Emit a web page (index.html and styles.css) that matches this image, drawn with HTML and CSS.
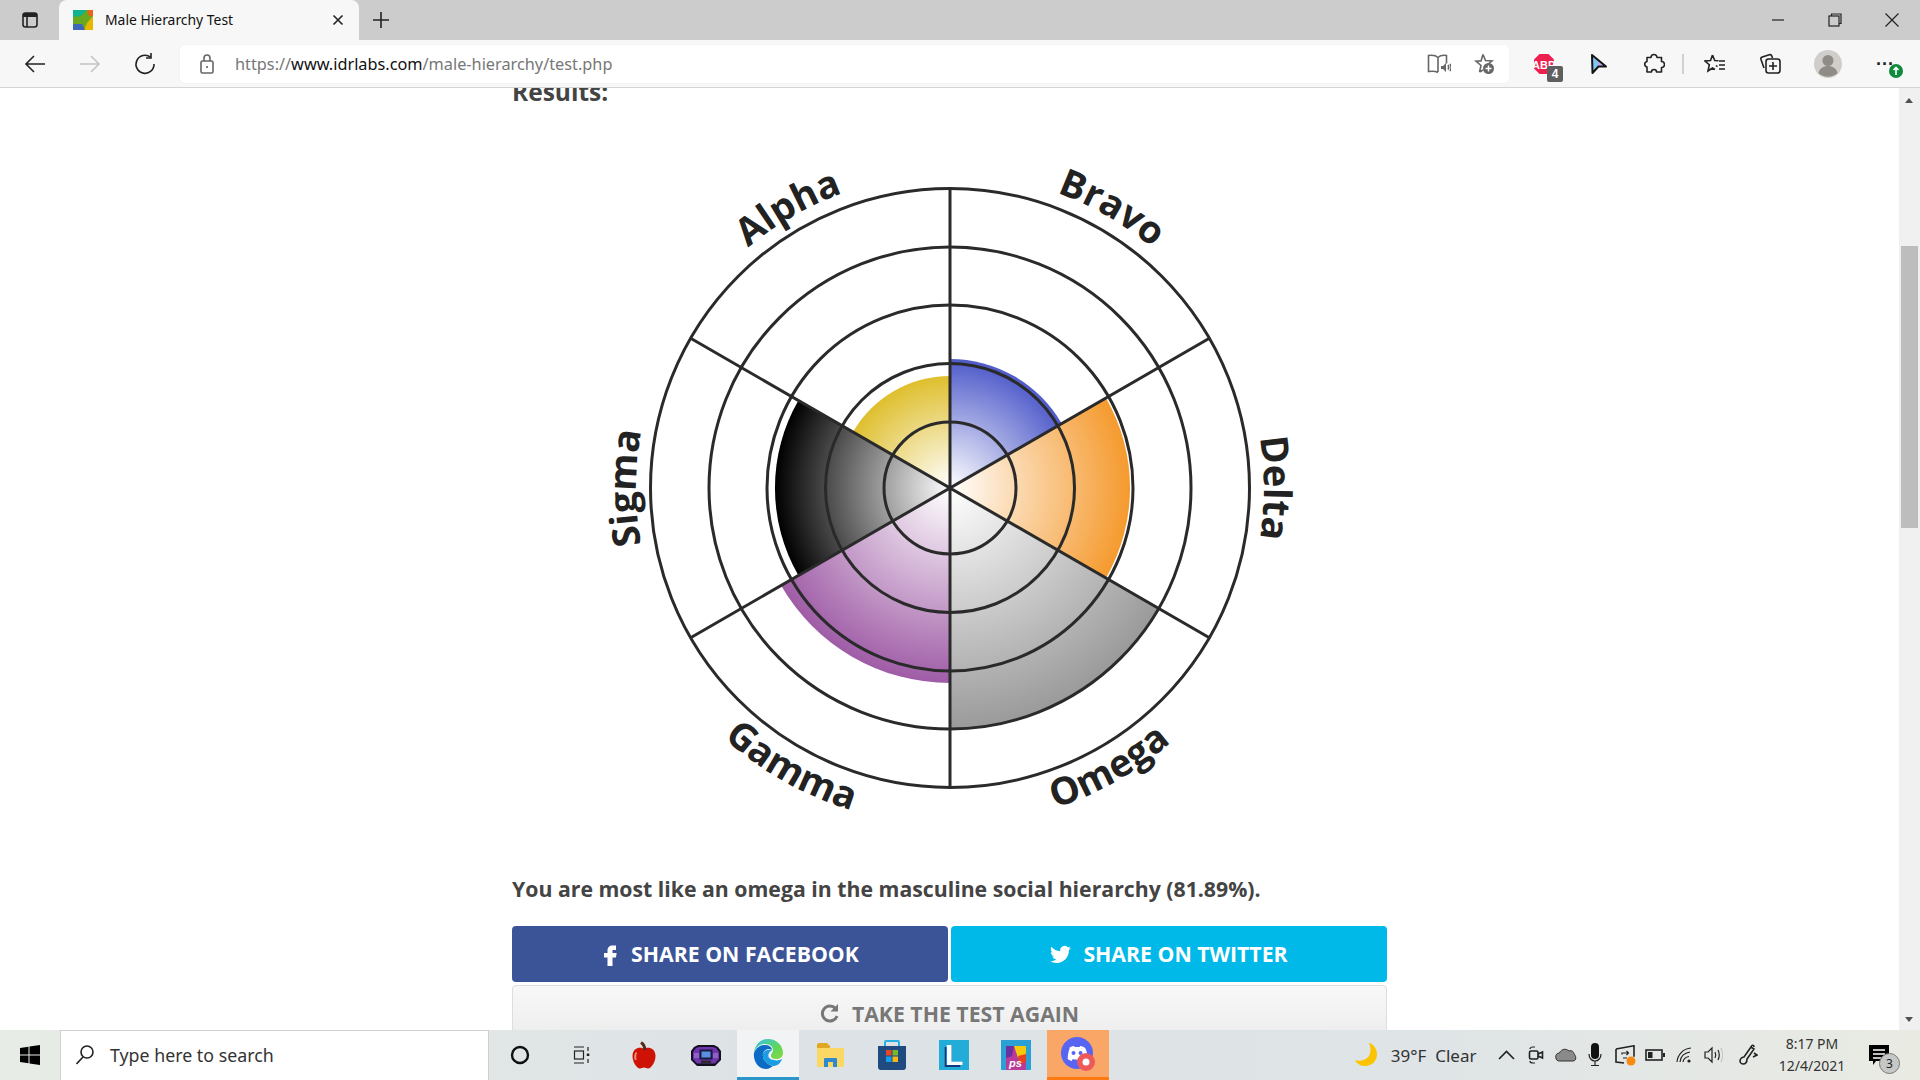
FILE: index.html
```html
<!DOCTYPE html>
<html lang="en">
<head>
  <meta charset="UTF-8" />
  <title>Male Hierarchy Test</title>
  <link rel="stylesheet" href="styles.css">
</head>
<body>
  <header class="titlebar">
    <span class="tab-actions">
      <svg width="20" height="20" viewBox="0 0 20 20"><rect x="3" y="3" width="14" height="14" rx="2.5" class="ic"/><path d="M3 7V5.500A2.500 2.500 0 0 1 5.500 3h9A2.500 2.500 0 0 1 17 5.500V7z" fill="#222"/><path d="M7 7v10" class="ic"/></svg>
    </span>
    <div class="tab">
      <svg class="favicon" width="20" height="20" viewBox="0 0 20 20"><rect width="20" height="20" fill="#6aa820"/><path d="M0 0h14l-6 6-8 1z" fill="#0fb48c"/><path d="M14 0h6v6l-4 0z" fill="#e8641a"/><path d="M20 6v14h-9l3-7z" fill="#e8b800"/><path d="M0 14h9l3 6H0z" fill="#3f66b8"/></svg>
      <span class="tab-title">Male Hierarchy Test</span>
      <svg class="tab-close" width="12" height="12" viewBox="0 0 12 12"><path d="M1.500 1.500l9 9M10.500 1.500l-9 9" class="ic"/></svg>
    </div>
    <svg class="new-tab" width="18" height="18" viewBox="0 0 18 18"><path d="M9 1v16M1 9h16" class="ic"/></svg>
    <div class="window-btns">
      <svg width="14" height="14" viewBox="0 0 14 14"><path d="M1 7h12" class="ic thin"/></svg>
      <svg width="14" height="14" viewBox="0 0 14 14"><rect x="1" y="3" width="10" height="10" class="ic thin"/><path d="M3.500 3V1h9.500v9.500H11" class="ic thin"/></svg>
      <svg width="14" height="14" viewBox="0 0 14 14"><path d="M.5.5l13 13M13.500.5l-13 13" class="ic thin"/></svg>
    </div>
  </header>

  <nav class="toolbar">
    <span class="slot"><svg width="22" height="20" viewBox="0 0 22 20"><path d="M21 10H2M10 2l-8 8 8 8" class="ic"/></svg></span>
    <span class="slot"><svg width="22" height="20" viewBox="0 0 22 20"><path d="M1 10h19M12 2l8 8-8 8" class="ic faded"/></svg></span>
    <span class="slot"><svg width="22" height="22" viewBox="0 0 22 22"><path d="M16.500 4.200A9 9 0 1 0 20 11" class="ic"/><path d="M17 0v5h-5" class="ic"/></svg></span>
    <div class="address">
      <svg class="lock" width="14" height="20" viewBox="0 0 14 20"><rect x="1" y="7" width="12" height="12" rx="1.500" class="ic grey"/><path d="M4 7V4a3 3 0 0 1 6 0v3" class="ic grey"/><circle cx="7" cy="13" r="1" fill="#555"/></svg>
      <span class="url">https://<b>www.idrlabs.com</b>/male-hierarchy/test.php</span>
      <svg class="read-aloud" width="24" height="20" viewBox="0 0 24 20"><path d="M11 3.500C9 1.500 5 1 1.500 1.500v16c3.500-.5 7-.5 9.500 1M11 3.500V18M11 3.500c2-2 5-2.500 8.500-2v8" class="ic grey"/><path d="M14 12h2l3-3v9l-3-3h-2z" fill="#666"/><path d="M21 11c.8 1.300.8 3 0 4.500M23 10c1.300 2 1.300 5 0 7" class="ic grey"/></svg>
      <svg class="fav-add" width="22" height="22" viewBox="0 0 22 22"><path d="M10 1.500l2.500 6 6.500.5-5 4.200M6.500 19l1.500-6.500L3 8.200l5-.3 2-6.400M6.500 19l3.500-2" class="ic grey"/><circle cx="15.500" cy="15.500" r="5.500" fill="#666"/><path d="M15.500 12.500v6M12.500 15.500h6" stroke="#fff" stroke-width="1.500"/></svg>
    </div>
    <span class="slot slot-abp">
      <svg width="22" height="22" viewBox="0 0 22 22"><path d="M6.500 1h9L21 6.500v9L15.500 21h-9L1 15.500v-9z" fill="#ee2050"/></svg>
      <span class="abp-text">ABP</span>
      <span class="abp-count">4</span>
    </span>
    <span class="slot"><svg width="18" height="22" viewBox="0 0 18 22"><defs><linearGradient id="cursor-fill" x1="0" y1="0" x2="1" y2="0"><stop offset=".3" stop-color="#7cc8f0"/><stop offset=".55" stop-color="#c4a4ee"/></linearGradient></defs><path d="M2 2l14 11.500H8.500L2.500 20z" fill="url(#cursor-fill)" stroke="#151515" stroke-width="2" stroke-linejoin="round"/></svg></span>
    <span class="slot"><svg width="22" height="22" viewBox="0 0 22 22"><path d="M8 4.500a3 3 0 0 1 6 0h4.500v4a3 3 0 0 1 0 6v4.500h-5a2.500 2.500 0 0 0-5 0H4v-5a2.800 2.800 0 0 1 0-5.500V4.500z" class="ic" stroke-linejoin="round"/></svg></span>
    <span class="tool-sep"></span>
    <span class="slot"><svg width="22" height="22" viewBox="0 0 22 22"><path d="M8.500 2l2.200 5.500 3.800.3M12 12.500l1.500 1.200M8.500 2L6.500 7.500 1 8l4.300 3.700L4 18l4.500-3 2.500 1.500" class="ic"/><path d="M15 8h6M15 12h6M15 16h6" class="ic"/></svg></span>
    <span class="slot"><svg width="22" height="22" viewBox="0 0 22 22"><path d="M5 15L2 6.500a2 2 0 0 1 1.300-2.500l7-2.200a2 2 0 0 1 2.500 1.200l.7 2" class="ic"/><rect x="7" y="6" width="14" height="14" rx="2.500" class="ic"/><path d="M14 9v8M10 13h8" class="ic"/></svg></span>
    <span class="avatar">
      <svg width="28" height="28" viewBox="0 0 28 28"><circle cx="14" cy="14" r="14" fill="#d0ceca"/><circle cx="14" cy="10.500" r="5.500" fill="#8f8c88"/><path d="M4.500 23c1.500-5 5-7 9.500-7s8 2 9.500 7a14 14 0 0 1-19 0z" fill="#8f8c88"/></svg>
    </span>
    <span class="slot slot-more">
      <span class="dots">···</span>
      <svg class="update" width="14" height="14" viewBox="0 0 14 14"><circle cx="7" cy="7" r="7" fill="#108a3c"/><path d="M7 11V3.500M4.500 6L7 3.500 9.500 6" stroke="#fff" stroke-width="1.600" fill="none"/></svg>
    </span>
  </nav>

  <div class="viewport">
    <main class="content">
      <h3 class="results">Results:</h3>
      <svg class="wheel" width="700" height="700" viewBox="-350 -350 700 700">
        <defs>
          <radialGradient id="g-alpha" gradientUnits="userSpaceOnUse" cx="0" cy="0" r="112"><stop offset="0" stop-color="#fff"/><stop offset="1" stop-color="#dfbf2e"/></radialGradient>
          <radialGradient id="g-bravo" gradientUnits="userSpaceOnUse" cx="0" cy="0" r="129"><stop offset="0" stop-color="#fff"/><stop offset="1" stop-color="#4f5bca"/></radialGradient>
          <radialGradient id="g-delta" gradientUnits="userSpaceOnUse" cx="0" cy="0" r="180"><stop offset="0" stop-color="#fff"/><stop offset="1" stop-color="#f59a2e"/></radialGradient>
          <radialGradient id="g-omega" gradientUnits="userSpaceOnUse" cx="0" cy="0" r="241"><stop offset="0" stop-color="#fff"/><stop offset="1" stop-color="#9a9a9a"/></radialGradient>
          <radialGradient id="g-gamma" gradientUnits="userSpaceOnUse" cx="0" cy="0" r="195"><stop offset="0" stop-color="#fff"/><stop offset="1" stop-color="#9f5ca6"/></radialGradient>
          <radialGradient id="g-sigma" gradientUnits="userSpaceOnUse" cx="0" cy="0" r="175"><stop offset="0" stop-color="#fff"/><stop offset="1" stop-color="#000"/></radialGradient>
          <path id="arc-out" d="M-240.500 -201.800A314 314 0 0 1 240.500 -201.800"/>
          <path id="arc-in" d="M-258.200 216.600A337 337 0 0 0 258.200 216.600"/>
        </defs>
        <path d="M0 0L-97 -56A112 112 0 0 1 0 -112Z" fill="url(#g-alpha)"/>
        <path d="M0 0L0 -129A129 129 0 0 1 111.700 -64.500Z" fill="url(#g-bravo)"/>
        <path d="M0 0L155.900 -90A180 180 0 0 1 155.900 90Z" fill="url(#g-delta)"/>
        <path d="M0 0L208.700 120.500A241 241 0 0 1 0 241Z" fill="url(#g-omega)"/>
        <path d="M0 0L0 195A195 195 0 0 1 -168.900 97.500Z" fill="url(#g-gamma)"/>
        <path d="M0 0L-151.600 87.500A175 175 0 0 1 -151.600 -87.500Z" fill="url(#g-sigma)"/>
        <g class="wheel-lines">
          <circle r="66"/><circle r="124.500"/><circle r="183"/><circle r="241"/><circle r="299.500"/>
          <path d="M0 -299.500V299.500M-259.400 -149.750L259.400 149.750M-259.400 149.750L259.400 -149.750"/>
        </g>
        <g class="wheel-labels">
          <text transform="rotate(-30)"><textPath href="#arc-out" startOffset="50%">Alpha</textPath></text>
          <text transform="rotate(30)"><textPath href="#arc-out" startOffset="50%">Bravo</textPath></text>
          <text transform="rotate(90)"><textPath href="#arc-out" startOffset="50%">Delta</textPath></text>
          <text transform="rotate(-29.600)"><textPath href="#arc-in" startOffset="50%">Omega</textPath></text>
          <text transform="rotate(29.600)"><textPath href="#arc-in" startOffset="50%">Gamma</textPath></text>
          <text transform="rotate(-90)"><textPath href="#arc-out" startOffset="50%">Sigma</textPath></text>
        </g>
      </svg>
      <p class="verdict">You are most like an omega in the masculine social hierarchy (81.89%).</p>
      <div class="share-row">
        <a class="btn btn-fb">
          <svg width="18" height="24" viewBox="3 0 18 24"><path d="M14.500 8H18V3.500h-3.500C11.500 3.500 9.500 5.500 9.500 8.500V11H6v4.500h3.500V24h5v-8.500H18l.6-4.500h-4.100V9c0-.6.4-1 0-1z" fill="#fff"/></svg>
          <span class="btn-label">SHARE ON FACEBOOK</span>
        </a>
        <a class="btn btn-tw">
          <svg width="21" height="21" viewBox="0 0 24 24"><path d="M23.953 4.570a10 10 0 01-2.825.775 4.958 4.958 0 002.163-2.723c-.951.555-2.005.959-3.127 1.184a4.920 4.920 0 00-8.384 4.482C7.690 8.095 4.067 6.130 1.640 3.162a4.822 4.822 0 00-.666 2.475c0 1.710.870 3.213 2.188 4.096a4.904 4.904 0 01-2.228-.616v.060a4.923 4.923 0 003.946 4.827 4.996 4.996 0 01-2.212.085 4.936 4.936 0 004.604 3.417 9.867 9.867 0 01-6.102 2.105c-.390 0-.779-.023-1.170-.067a13.995 13.995 0 007.557 2.209c9.053 0 13.998-7.496 13.998-13.985 0-.210 0-.420-.015-.630A9.935 9.935 0 0024 4.590z" fill="#fff"/></svg>
          <span class="btn-label">SHARE ON TWITTER</span>
        </a>
      </div>
      <a class="btn btn-again">
        <svg width="20" height="20" viewBox="0 0 20 20"><path d="M15.500 5.500A7.500 7.500 0 1 0 17 13" fill="none" stroke="#777" stroke-width="3"/><path d="M18 1v7.500h-7.500z" fill="#777"/></svg>
        TAKE THE TEST AGAIN
      </a>
    </main>
    <aside class="scrollbar">
      <span class="arrow-up"></span>
      <span class="thumb"></span>
      <span class="arrow-down"></span>
    </aside>
  </div>

  <footer class="taskbar">
    <span class="start">
      <svg width="20" height="20" viewBox="0 0 20 20"><path d="M0 3l8.500-1.200V9.500H0zM9.500 1.600L20 0v9.500H9.500zM0 10.500h8.500v7.700L0 17zM9.500 10.500H20V20L9.500 18.400z" fill="#000"/></svg>
    </span>
    <div class="search">
      <svg width="18" height="20" viewBox="0 0 18 20"><circle cx="11" cy="7" r="6" class="ic"/><path d="M7 12l-6.500 7" class="ic"/></svg>
      <span>Type here to search</span>
    </div>
    <span class="task"><svg width="20" height="20" viewBox="0 0 20 20"><circle cx="10" cy="10" r="8" fill="none" stroke="#111" stroke-width="2.400"/></svg></span>
    <span class="task"><svg width="18" height="18" viewBox="0 0 18 18"><path d="M1 1h10M1 17h10" class="ic thin"/><rect x="1.500" y="5" width="9" height="8" class="ic thin"/><path d="M15 1v4M15 13v4" class="ic thin"/><rect x="13.800" y="7.500" width="2.500" height="2.500" fill="#222"/></svg></span>
    <span class="task"><svg width="24" height="28" viewBox="0 0 24 28"><path d="M12 8C9 5.500 1 6 .5 14.500.2 21 5 27.500 8 27.500c1.500 0 2.500-1 4-1s2.500 1 4 1c3 0 7.800-6.500 7.500-13C23 6 15 5.500 12 8z" fill="#cf1206"/><path d="M4.500 11.500c-1.500 2-1.500 5-.8 7.500" stroke="#f08a70" stroke-width="2" fill="none"/><path d="M12.500 9c.5-3-.5-5.500-3.500-7.500" stroke="#5a2a18" stroke-width="3" fill="none"/></svg></span>
    <span class="task"><svg width="30" height="21" viewBox="0 0 30 21"><path d="M0 6l3-4 4-2h16l4 2 3 4v9l-3 3-3 3H6l-3-3-3-3z" fill="#15101f"/><path d="M2 7l3-4 3-1h14l3 1 3 4v7l-4 4.500H6L2 14z" fill="#6f35ae"/><path d="M3 8h5v5H3zM22 8h5v5h-5z" fill="#8f60c8"/><rect x="8.500" y="4.500" width="13" height="10" fill="#1a1a40"/><rect x="10.500" y="6.500" width="9" height="6" fill="#5a90e0"/><path d="M10 15.500h10v3H10z" fill="#2a2a30"/></svg></span>
    <span class="task task-active"><svg width="30" height="30" viewBox="0 0 30 30"><defs><linearGradient id="edge-a" x1="0" y1="0" x2="1" y2="1"><stop offset="0" stop-color="#35c1f1"/><stop offset=".6" stop-color="#5fd65b"/><stop offset="1" stop-color="#8ad83f"/></linearGradient></defs><path d="M1 14C2 5 8 0 15 0c8 0 15 6 15 14 0 4-3 6-7 6-3 0-5-1-5-3 0-3 2-3 2-6 0-4-4-6-9-6-4 0-8 3-10 9z" fill="url(#edge-a)"/><path d="M1 14c2-5 6-8 10-8 5 0 8 2 8 5-3-2-8-1-9 4-1 5 3 10 10 12-2 1-4 3-7 3C6 30 0 23 1 14z" fill="#0c6bc4"/><path d="M10 15c-1 5 3 10 10 12 4 0 7-2 9-7-2 1-5 2-8 1-4 0-7-3-5-7 .5-1 2-2 3-3-4-1-8 0-9 4z" fill="#1b9de2"/></svg></span>
    <span class="task"><svg width="28" height="26" viewBox="0 0 28 26"><path d="M1 3a2 2 0 0 1 2-2h8l3 3h0v3H1z" fill="#e0a822"/><path d="M1 6h27v18a1 1 0 0 1-1 1H2a1 1 0 0 1-1-1z" fill="#fbd763"/><path d="M8 25v-8a1 1 0 0 1 1-1h11a1 1 0 0 1 1 1v8h-4v-5h-5v5z" fill="#2f88d0"/></svg></span>
    <span class="task"><svg width="30" height="32" viewBox="0 0 30 32"><path d="M8 7V3a1 1 0 0 1 1-1h12a1 1 0 0 1 1 1v4" fill="none" stroke="#28b0e0" stroke-width="2"/><path d="M1 7h28v21a3 3 0 0 1-3 3H4a3 3 0 0 1-3-3z" fill="#1f4b80"/><rect x="9" y="11" width="5.500" height="5.500" fill="#e8462a"/><rect x="15.500" y="11" width="5.500" height="5.500" fill="#7ab82a"/><rect x="9" y="17.500" width="5.500" height="5.500" fill="#14a0e8"/><rect x="15.500" y="17.500" width="5.500" height="5.500" fill="#f8b810"/></svg></span>
    <span class="task"><span class="tile tile-l">L</span></span>
    <span class="task"><svg width="30" height="30" viewBox="0 0 30 30"><rect width="30" height="30" fill="#2aa0d4"/><rect x="5" y="6" width="20" height="24" fill="#b83a9a"/><path d="M13 6h12v10l-8 2z" fill="#f6c80a"/><path d="M5 6h8l-2 10-6 2z" fill="#6a2fa0"/><path d="M17 16l8-2v8l-6 2z" fill="#e8421e"/><text x="8" y="27" class="tile-ps">ps</text></svg></span>
    <span class="task task-discord"><svg width="38" height="38" viewBox="0 0 38 38"><circle cx="18" cy="18" r="16" fill="#5865f2"/><path d="M10 13c3-2 5-2 5-2l.6 1h5l.6-1s2 0 5 2c2 4 2.500 8 2.500 11-2 1.500-4 2-4 2l-1-2c-3 1-7 1-10 0l-1 2s-2-.5-4-2c0-3 .5-7 2-11z" fill="#fff"/><circle cx="14.500" cy="18" r="2" fill="#5865f2"/><circle cx="21.500" cy="18" r="2" fill="#5865f2"/><circle cx="27" cy="27" r="9" fill="#ee5a5a"/><circle cx="27" cy="27" r="3.500" fill="#fff"/></svg></span>
    <div class="tray">
      <svg class="moon" width="24" height="24" viewBox="0 0 24 24"><path d="M15 0c3 0 8 5 8 11 0 7-5 12-12 12-4 0-8-2-10-6 5 2 11 0 14-4 2-4 2-9 0-13z" fill="#fcc400"/></svg>
      <span class="weather">39°F&nbsp; Clear</span>
      <span class="tray-slot"><svg width="17" height="10" viewBox="0 0 17 10"><path d="M1 9l7.500-7.500L16 9" class="ic"/></svg></span>
      <span class="tray-slot"><svg width="16" height="18" viewBox="0 0 16 18"><path d="M2 3c0-1 1-2 3-2h2M2 15c0 1 1 2 3 2h2" class="ic thin"/><rect x="1.500" y="5" width="8.500" height="8" rx="1.500" class="ic"/><path d="M10 8l4.500-2v6L10 10" class="ic"/></svg></span>
      <span class="tray-slot"><svg width="22" height="14" viewBox="0 0 22 14"><path d="M5 13a4 4 0 0 1-.5-8C6 1 11 0 14 3c3-1 5 1 5 3 2 1 3 7-1 7z" fill="#8a8a8a" stroke="#333" stroke-width="1"/></svg></span>
      <span class="tray-slot"><svg width="14" height="24" viewBox="0 0 14 24"><rect x="3" y="0" width="8" height="16" rx="4" fill="#111"/><path d="M1 11c0 4 2.500 7 6 7s6-3 6-7M7 18v4M3 22.500h8" class="ic thin"/></svg></span>
      <span class="tray-slot"><svg width="21" height="21" viewBox="0 0 21 21"><path d="M1 4l18-3.200v11M1 4v13l8 1" class="ic"/><path d="M7 9.500V8h6.500M11.500 6l2 2-2 2M12 13H8" class="ic thin"/><circle cx="16" cy="16" r="4.500" fill="#f98a10"/></svg></span>
      <span class="tray-slot"><svg width="20" height="12" viewBox="0 0 20 12"><rect x="1" y="1" width="16" height="10" class="ic"/><rect x="3" y="3" width="4.500" height="6" fill="#222"/><path d="M18 4h2v4h-2z" fill="#222"/></svg></span>
      <span class="tray-slot"><svg width="16" height="16" viewBox="0 0 16 16"><path d="M1 15C1.500 8 7 1.500 15 1M4 15c.5-5 4-9 10-10M7 15c.5-3 3-5 6-5.500" class="ic thin"/><circle cx="13" cy="14" r="1.600" fill="#222"/></svg></span>
      <span class="tray-slot"><svg width="20" height="18" viewBox="0 0 20 18"><path d="M1 6h3l4-4v14l-4-4H1z" class="ic thin"/><path d="M11 6c1 2 1 4 0 6M14 4c1.500 3 1.500 7 0 10" class="ic thin"/><path d="M17 2c2 4 2 10 0 14" class="ic thin faded"/></svg></span>
      <span class="tray-slot tray-pen"><svg width="20" height="22" viewBox="0 0 20 22"><path d="M13 3L6 13c-1 0-4 1-4 4 0 2 2 3 3 3 3 0 4-2 4-5l7-10zM13 3c.5-2 3-2.500 3 0M16 9l3 2-4 2" class="ic"/></svg></span>
      <div class="clock"><span>8:17 PM</span><span>12/4/2021</span></div>
      <span class="notify">
        <svg width="22" height="22" viewBox="0 0 22 22"><path d="M1 1h20v16H8l-3 4v-4H1z" fill="#000"/><path d="M5 6h12M5 10h12M5 14h8" stroke="#fff" stroke-width="1.400"/></svg>
        <span class="notify-count">3</span>
      </span>
    </div>
  </footer>
</body>
</html>
```

FILE: styles.css
```css
html, body { margin: 0; height: 100%; overflow: hidden; }
body { display: flex; flex-direction: column; background: #fff; font-family: "Noto Sans", sans-serif; color: #222; }
svg { display: block; }
.ic { fill: none; stroke: #222; stroke-width: 1.600; }
.thin { stroke-width: 1.200; }
.grey { stroke: #666; }
.faded { stroke: #c4c4c4; }

/* browser chrome */
.titlebar { flex: 0 0 40px; display: flex; align-items: center; background: #ccc; }
.tab-actions { width: 59px; display: flex; justify-content: center; }
.tab { width: 300px; height: 40px; box-sizing: border-box; padding: 0 15px 0 14px; display: flex; align-items: center; background: #f7f7f7; border-radius: 8px 8px 0 0; }
.tab-title { margin-left: 12px; margin-bottom: 1px; flex: 1; font-size: 13.900px; color: #111; }
.new-tab { margin-left: 13px; }
.window-btns { margin-left: auto; display: flex; gap: 43px; padding-right: 21px; }

.toolbar { flex: 0 0 48px; box-sizing: border-box; padding-left: 7px; display: flex; align-items: center; background: #f7f7f7; border-bottom: 1px solid #d4d4d4; }
.slot { position: relative; flex: 0 0 55px; display: flex; justify-content: center; align-items: center; }
.address { flex: 0 0 1329px; height: 38px; margin-left: 8px; margin-right: 7px; box-sizing: border-box; padding: 0 14px 0 20px; display: flex; align-items: center; background: #fff; border-radius: 5px; box-shadow: 0 0 2px rgba(0, 0, 0, .06); }
.url { margin-left: 21px; flex: 1; font-size: 16.300px; color: #777; }
.url b { font-weight: 400; color: #111; }
.read-aloud { margin-right: 22px; }
.abp-text { position: absolute; left: 16px; top: 6px; font: 700 11px "Liberation Sans", sans-serif; color: #fff; }
.abp-count { position: absolute; left: 31px; top: 13px; width: 16px; height: 16px; background: #5f5f5f; border-radius: 2px; font: 700 12px/16px "Liberation Sans", sans-serif; color: #fff; text-align: center; }
.tool-sep { width: 2px; height: 20px; margin: 0 3.500px 0 1px; background: #d0d0d0; }
.avatar { flex: 0 0 60px; display: flex; justify-content: center; }
.dots { font: 700 18px/1 "Liberation Sans", sans-serif; color: #222; }
.update { position: absolute; left: 31px; top: 9px; }

/* page */
.viewport { flex: 1; min-height: 0; display: flex; overflow: hidden; }
.content { flex: 1; min-width: 0; display: flex; flex-direction: column; align-items: center; }
.results, .verdict { width: 875px; margin: 0; font: 700 21.250px/28px "Open Sans", sans-serif; color: #444; }
.results { margin-top: -10px; font-size: 24.500px; }
.wheel { margin-top: 32px; flex: none; }
.wheel-lines { fill: none; stroke: #2a2a2a; stroke-width: 3; }
.wheel-labels { font: 700 38px "Open Sans", sans-serif; fill: #222; text-anchor: middle; }
.verdict { margin-top: 37px; }
.share-row { width: 875px; margin-top: 23px; flex: none; display: flex; gap: 3px; }
.btn { box-sizing: border-box; display: flex; justify-content: center; align-items: center; gap: 12px; font: 700 21.250px "Open Sans", sans-serif; border-radius: 4px; text-transform: uppercase; }
.btn-fb, .btn-tw { flex: 1; height: 56px; color: #fff; }
.btn-label { margin-bottom: 2px; }
.btn-fb { background: #3b5497; }
.btn-tw { background: #00b9e8; }
.btn-again { width: 875px; height: 56px; margin-top: 3px; flex: none; color: #777; background: linear-gradient(#f8f8f8, #ececec); border: 1px solid #ddd; }
.scrollbar { flex: 0 0 21px; position: relative; background: #f0f0f0; }
.thumb { position: absolute; left: 2px; right: 2px; top: 158px; height: 282px; background: #bdbdbd; }
.arrow-up, .arrow-down { position: absolute; left: 6px; width: 0; height: 0; border-left: 4.500px solid transparent; border-right: 4.500px solid transparent; }
.arrow-up { top: 10px; border-bottom: 5px solid #505050; }
.arrow-down { bottom: 8px; border-top: 5px solid #505050; }

/* windows taskbar */
.taskbar { flex: 0 0 50px; display: flex; align-items: stretch; background: linear-gradient(90deg, #e8ece6, #dde2e6 40%, #dfe4e6 75%, #e9ebe3); }
.start { flex: 0 0 60px; display: flex; justify-content: center; align-items: center; }
.search { flex: 0 0 429px; box-sizing: border-box; padding: 0 0 2px 15px; display: flex; align-items: center; gap: 16px; background: #fff; border: 1px solid #cfcfcf; border-bottom: 0; font-size: 17.800px; color: #333; }
.task { flex: 0 0 62px; box-sizing: border-box; display: flex; justify-content: center; align-items: center; }
.task-active { background: #f1f3f4; border-bottom: 3px solid #2a96ca; }
.task-discord { background: #f9a666; border-bottom: 3px solid #ff7a10; }
.tile { width: 30px; height: 30px; background: #24acd8; display: flex; justify-content: center; align-items: center; }
.tile-l { font: 700 30px "Liberation Sans", sans-serif; color: #fff; text-shadow: -2px 2px 0 #103a80; }
.tile-ps { font: italic 700 11px "Liberation Sans", sans-serif; fill: #fff; }
.tray { margin-left: auto; padding-right: 19px; display: flex; align-items: center; }
.moon { margin-right: 13px; }
.weather { margin-right: 15px; font-size: 17px; color: #333; }
.tray-slot { flex: 0 0 29.700px; display: flex; justify-content: center; }
.tray-pen { flex-basis: 38px; }
.clock { width: 90px; display: flex; flex-direction: column; align-items: center; gap: 4px; font-size: 14px; line-height: 18px; color: #333; }
.notify { position: relative; width: 44px; display: flex; justify-content: center; }
.notify-count { position: absolute; left: 22px; top: 9px; width: 19px; height: 19px; border-radius: 50%; background: #c6c8c8; border: 1px solid #777; font-size: 12px; line-height: 19px; text-align: center; color: #222; }
```
